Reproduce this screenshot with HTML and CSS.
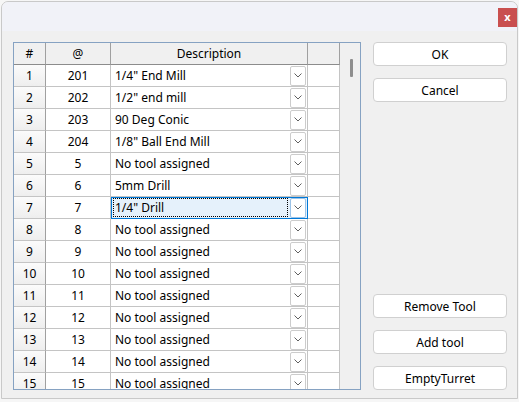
FILE: index.html
```html
<!DOCTYPE html>
<html lang="en">
<head>
    <meta charset="UTF-8">
    <title>Tool Table</title>
    <link rel="stylesheet" href="styles.css">
</head>
<body>
    <div class="window">
        <div class="titlebar">
            <div class="close">x</div>
        </div>
        <div class="content">
            <div class="grid-frame">
                <div class="grid-view">
                    <div class="hd">#</div>
                    <div class="hd">@</div>
                    <div class="hd">Description</div>
                    <div class="hd"></div>

                    <div class="rh">1</div><div class="c num">201</div><div class="c desc"><span class="txt">1/4" End Mill</span><span class="dd"></span></div><div class="c"></div>
                    <div class="rh">2</div><div class="c num">202</div><div class="c desc"><span class="txt">1/2" end mill</span><span class="dd"></span></div><div class="c"></div>
                    <div class="rh">3</div><div class="c num">203</div><div class="c desc"><span class="txt">90 Deg Conic</span><span class="dd"></span></div><div class="c"></div>
                    <div class="rh">4</div><div class="c num">204</div><div class="c desc"><span class="txt">1/8" Ball End Mill</span><span class="dd"></span></div><div class="c"></div>
                    <div class="rh">5</div><div class="c num">5</div><div class="c desc"><span class="txt">No tool assigned</span><span class="dd"></span></div><div class="c"></div>
                    <div class="rh">6</div><div class="c num">6</div><div class="c desc"><span class="txt">5mm Drill</span><span class="dd"></span></div><div class="c"></div>
                    <div class="rh">7</div><div class="c num">7</div><div class="c desc selected"><span class="txt focus">1/4" Drill</span><span class="dd"></span></div><div class="c"></div>
                    <div class="rh">8</div><div class="c num">8</div><div class="c desc"><span class="txt">No tool assigned</span><span class="dd"></span></div><div class="c"></div>
                    <div class="rh">9</div><div class="c num">9</div><div class="c desc"><span class="txt">No tool assigned</span><span class="dd"></span></div><div class="c"></div>
                    <div class="rh">10</div><div class="c num">10</div><div class="c desc"><span class="txt">No tool assigned</span><span class="dd"></span></div><div class="c"></div>
                    <div class="rh">11</div><div class="c num">11</div><div class="c desc"><span class="txt">No tool assigned</span><span class="dd"></span></div><div class="c"></div>
                    <div class="rh">12</div><div class="c num">12</div><div class="c desc"><span class="txt">No tool assigned</span><span class="dd"></span></div><div class="c"></div>
                    <div class="rh">13</div><div class="c num">13</div><div class="c desc"><span class="txt">No tool assigned</span><span class="dd"></span></div><div class="c"></div>
                    <div class="rh">14</div><div class="c num">14</div><div class="c desc"><span class="txt">No tool assigned</span><span class="dd"></span></div><div class="c"></div>
                    <div class="rh">15</div><div class="c num">15</div><div class="c desc"><span class="txt">No tool assigned</span><span class="dd"></span></div><div class="c"></div>
                </div>
                <div class="vscroll">
                    <div class="thumb"></div>
                </div>
            </div>

            <div class="buttons">
                <button>OK</button>
                <button>Cancel</button>
                <div class="spacer"></div>
                <button>Remove Tool</button>
                <button>Add tool</button>
                <button>EmptyTurret</button>
            </div>
        </div>
    </div>
</body>
</html>
```

FILE: styles.css
```css
body {
    margin: 0;
    padding: 1px;
    background: #f6f6f6;
    font-family: "Noto Sans", Arial, sans-serif;
    font-size: 12px;
    color: #000;
}
.window {
    width: 517px;
    height: 398px;
    box-sizing: border-box;
    border: 1px solid #c9c9c9;
    border-radius: 7px 7px 0 0;
    background: #f0f0f0;
    overflow: hidden;
}
.titlebar {
    height: 29px;
    background: #f1f2f8;
    display: flex;
    justify-content: flex-end;
    align-items: flex-start;
}
.close {
    width: 19px;
    height: 19px;
    margin-top: 6px;
    background: #c94f4f;
    color: white;
    font-weight: bold;
    font-size: 11px;
    line-height: 17px;
    text-align: center;
}
.content {
    display: flex;
    padding: 11px 10px 0 11px;
    gap: 12px;
}
.grid-frame {
    display: flex;
    width: 348px;
    height: 348px;
    box-sizing: border-box;
    border: 1px solid #86a2c2;
    background: #f0f0f0;
}
.grid-view {
    display: grid;
    grid-template-columns: 32px 65px 197px 32px;
    grid-auto-rows: 22px;
    overflow: hidden;
    background: white;
    align-content: start;
}
.hd, .rh, .c {
    box-sizing: border-box;
    border-right: 1px solid #c4c4c4;
    border-bottom: 1px solid #c4c4c4;
    display: flex;
    align-items: center;
    justify-content: center;
    white-space: nowrap;
}
.hd {
    background: #f0f0f0;
    border-right-color: #a0a0a0;
    border-bottom-color: #8c8c8c;
}
.rh {
    background: linear-gradient(#fbfbfb, #eeeeee);
    border-right-color: #a0a0a0;
}
.c.desc {
    justify-content: flex-start;
    padding: 0 1px 0 2px;
}
.txt {
    flex: 1;
    padding-left: 1px;
    border: 1px solid transparent;
    line-height: 17px;
}
.selected {
    background: #e5f1fb;
    outline: 1px solid #0078d7;
    outline-offset: -1px;
}
.focus {
    border: 1px dotted #000;
    margin-right: 2px;
}
.dd {
    width: 16px;
    height: 20px;
    box-sizing: border-box;
    border: 1px solid #cccccc;
    border-radius: 2px;
    background: white url("data:image/svg+xml,%3Csvg xmlns='http://www.w3.org/2000/svg' width='8' height='5'%3E%3Cpolyline points='0.5,0.5 4,4 7.5,0.5' fill='none' stroke='%23606060' stroke-width='1'/%3E%3C/svg%3E") no-repeat center;
}
.selected .dd {
    border-color: #9cc3e8;
}
.vscroll {
    width: 20px;
    background: #f0f0f0;
}
.thumb {
    width: 3px;
    height: 18px;
    margin: 16px 0 0 10px;
    background: #8e8e8e;
    border-radius: 1px;
}
.buttons {
    display: flex;
    flex-direction: column;
    gap: 12px;
    width: 134px;
    height: 348px;
}
.spacer {
    flex: 1;
}
button {
    height: 24px;
    box-sizing: border-box;
    background: white;
    border: 1px solid #d0d0d0;
    border-radius: 4px;
    font-family: "Noto Sans", Arial, sans-serif;
    font-size: 12px;
    color: #000;
    padding: 0;
}
```
